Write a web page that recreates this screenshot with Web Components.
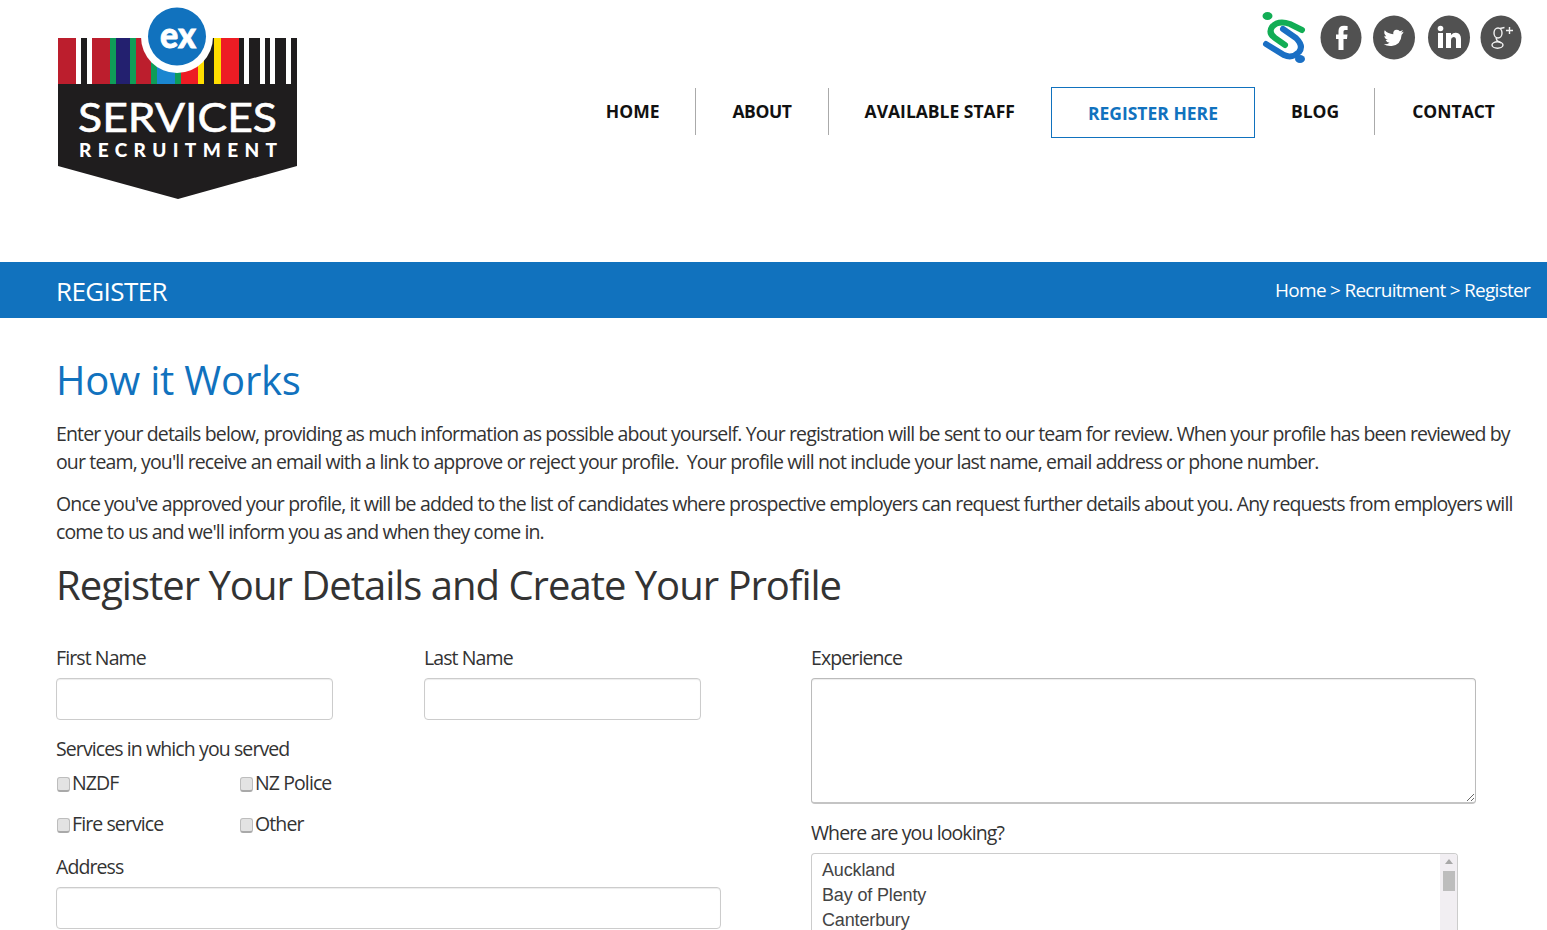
<!DOCTYPE html>
<html lang="en">
<head>
<meta charset="utf-8">
<title>Register</title>
<style>
html, body { margin: 0; padding: 0; height: 930px; overflow: hidden; background: #fff; }
body { font-family: "Open Sans", sans-serif; color: #333; }
</style>
</head>
<body>
<site-header></site-header>
<page-banner heading="REGISTER" trail="Home > Recruitment > Register"></page-banner>
<register-page></register-page>

<script>
class SiteLogo extends HTMLElement {
    constructor() {
        super();
        this.attachShadow({ mode: 'open' });
        // [x, width, colour] measured along the top band, left to right
        const stripes = [
            [58, 18, '#bc1e2d'], [81, 6, '#1f1d1e'], [92, 18, '#bc1e2d'], [110, 6, '#0f9d58'],
            [116, 14, '#23206f'], [130, 6, '#0f9d58'], [136, 15, '#bc1e2d'], [151, 6, '#0f9d58'],
            [157, 18, '#1a86d0'], [175, 6, '#0f9d58'], [181, 17, '#ed1c24'], [198, 6, '#ffdd00'],
            [204, 10, '#1f1d1e'], [214, 7, '#ffdd00'], [221, 18, '#ed1c24'], [239, 5, '#1f1d1e'],
            [249, 11, '#1f1d1e'], [265, 5, '#1f1d1e'], [275, 11, '#1f1d1e'], [291, 6, '#1f1d1e']
        ];
        const bars = stripes.map(s => `<rect x="${s[0]}" y="38" width="${s[1]}" height="47" fill="${s[2]}"/>`).join('');
        this.shadowRoot.innerHTML = `
            <style>
                :host { display: block; width: 240px; height: 193px; }
                svg { display: block; }
                text { font-family: "Lato", sans-serif; fill: #fff; }
            </style>
            <svg width="240" height="193" viewBox="58 7 240 193">
                ${bars}
                <path d="M58 84H297V166L178 199L58 166Z" fill="#1f1d1e"/>
                <circle cx="177" cy="37" r="36" fill="#fff"/>
                <circle cx="177" cy="36.500" r="29" fill="#1172be"/>
                <text x="160" y="48" font-size="36" font-weight="900" textLength="36" lengthAdjust="spacingAndGlyphs" stroke="#fff" stroke-width=".8">ex</text>
                <text x="78" y="132" font-size="40" font-weight="400" textLength="199" lengthAdjust="spacingAndGlyphs" stroke="#fff" stroke-width=".6">SERVICES</text>
                <text x="79" y="157" font-size="19" font-weight="900" textLength="198">RECRUITMENT</text>
            </svg>
        `;
    }
}

class SocialIcons extends HTMLElement {
    constructor() {
        super();
        this.attachShadow({ mode: 'open' });
        this.shadowRoot.innerHTML = `
            <style>
                :host { display: block; width: 262px; height: 52px; }
                svg { display: block; }
            </style>
            <svg width="262" height="52" viewBox="1261 12 262 52">
                <g fill="none" stroke-linecap="round" stroke-width="6">
                    <path d="M1283 29L1296 38Q1304 46 1299 52Q1292 59 1284 55L1266 44" stroke="#1a6fc4"/>
                    <path d="M1302 30L1290 24Q1278 20 1272 27Q1268 33 1275 38L1285 45" stroke="#12ad55"/>
                </g>
                <ellipse cx="1267.500" cy="16" rx="5" ry="4" fill="#12ad55"/>
                <ellipse cx="1300" cy="59" rx="5" ry="4" fill="#1a6fc4"/>

                <ellipse cx="1341" cy="37.500" rx="20.500" ry="22" fill="#515151"/>
                <path d="M1343.500 50V39H1347L1347.500 34.500H1343.500V31.500Q1343.500 30 1345 30H1347.600V26Q1346 25.700 1344 25.700Q1338.500 25.700 1338.500 31V34.500H1336V39H1338.500V50Z" fill="#fff"/>

                <ellipse cx="1394" cy="37.500" rx="21" ry="22" fill="#515151"/>
                <g transform="translate(1394 38) scale(.74) translate(-1394 -38)">
                    <path d="M1407 29.500Q1405 30.500 1403.500 30.600Q1405.500 29.300 1406 27.300Q1404 28.500 1402 29Q1400 27 1397.500 27Q1392.500 27.300 1393 32.800Q1386 32.500 1381.500 27.500Q1379.500 32 1383.500 35.500Q1382 35.500 1381 34.800Q1381 39 1385.500 40.500Q1384 41 1382.700 40.600Q1384 44 1388 44.400Q1385 46.800 1380 46.500Q1385 49.500 1391 48.800Q1403.500 47 1404.300 33.500Q1406 32 1407 29.500Z" fill="#fff"/>
                </g>

                <ellipse cx="1449" cy="37.500" rx="21" ry="22" fill="#515151"/>
                <g fill="#fff">
                    <rect x="1438" y="33" width="5" height="15"/>
                    <circle cx="1440.500" cy="28.500" r="2.800"/>
                    <path d="M1446 33H1451V35Q1453 32.500 1456 32.700Q1461 33 1461 39V48H1456V40Q1456 37 1453.500 37Q1451 37.300 1451 40V48H1446Z"/>
                </g>

                <ellipse cx="1501" cy="37.500" rx="20.500" ry="22" fill="#515151"/>
                <g fill="none" stroke="#f2f2f2" stroke-width="1.400">
                    <ellipse cx="1498" cy="33" rx="4" ry="5"/>
                    <ellipse cx="1497.500" cy="45" rx="5.500" ry="3.200"/>
                    <path d="M1500 28.500L1504.500 27.500M1496 38L1497 40.500L1501 43"/>
                    <path d="M1509.500 27V34M1506 30.500H1513"/>
                </g>
            </svg>
        `;
    }
}

class NavItem extends HTMLElement {
    constructor() {
        super();
        this.attachShadow({ mode: 'open' });
        this.shadowRoot.innerHTML = `
            <style>
                :host {
                    display: block; height: 47px; line-height: 47px; padding: 0 36px;
                    font-size: 17.500px; font-weight: 700; color: #111; white-space: nowrap;
                }
                :host([divider]) { border-right: 1px solid #aaa; }
                :host([current]) {
                    height: 49px; line-height: 51px; margin-top: -1px; color: #1172be;
                    border: 1px solid #1172be;
                }
            </style>
            <slot></slot>
        `;
    }
}

class SiteNav extends HTMLElement {
    constructor() {
        super();
        this.attachShadow({ mode: 'open' });
        this.shadowRoot.innerHTML = `
            <style>
                :host { display: flex; align-items: flex-start; }
            </style>
            <slot></slot>
        `;
    }
}

class SiteHeader extends HTMLElement {
    constructor() {
        super();
        this.attachShadow({ mode: 'open' });
        this.shadowRoot.innerHTML = `
            <style>
                :host {
                    display: flex; justify-content: space-between; height: 262px;
                    box-sizing: border-box; padding: 7px 16px 0 58px;
                }
                .right { display: flex; flex-direction: column; align-items: flex-end; padding-top: 5px; }
                social-icons { margin-right: 8px; }
                site-nav { margin-top: 24px; }
            </style>
            <site-logo></site-logo>
            <div class="right">
                <social-icons></social-icons>
                <site-nav>
                    <nav-item divider>HOME</nav-item>
                    <nav-item divider style="letter-spacing:-.4px">ABOUT</nav-item>
                    <nav-item>AVAILABLE STAFF</nav-item>
                    <nav-item current>REGISTER HERE</nav-item>
                    <nav-item divider style="padding-right:35px">BLOG</nav-item>
                    <nav-item style="padding-left:37px">CONTACT</nav-item>
                </site-nav>
            </div>
        `;
    }
}

class PageBanner extends HTMLElement {
    constructor() {
        super();
        this.attachShadow({ mode: 'open' });
        const heading = this.getAttribute('heading');
        const trail = this.getAttribute('trail').replace(/>/g, '&gt;');
        this.shadowRoot.innerHTML = `
            <style>
                :host {
                    display: flex; justify-content: space-between; align-items: center;
                    height: 56px; box-sizing: border-box; padding: 0 17px 0 56px;
                    background: #1172be; color: #fff;
                }
                .title { font-size: 26px; letter-spacing: -0.6px; padding-top: 1px; }
                .trail { font-size: 19px; letter-spacing: -0.73px; }
            </style>
            <div class="title">${heading}</div>
            <div class="trail">${trail}</div>
        `;
    }
}

class FormField extends HTMLElement {
    constructor() {
        super();
        this.attachShadow({ mode: 'open' });
        const kind = this.getAttribute('kind') || 'text';
        const control = kind === 'area' ? '<textarea></textarea>' : '<input type="text">';
        this.shadowRoot.innerHTML = `
            <style>
                :host { display: block; }
                label { display: block; font-size: 19.500px; line-height: 27px; letter-spacing: -0.9px; color: #333; margin-bottom: 7px; }
                input, textarea {
                    display: block; width: 100%; box-sizing: border-box; height: 42px; margin: 0;
                    border: 1px solid #ccc; border-radius: 4px; background: #fff; outline: 0;
                    box-shadow: inset 0 1px 1px rgba(0,0,0,.075);
                }
                textarea { height: 126px; border-color: #bbb; border-bottom: 2px solid #c4c4c4; }
            </style>
            <label>${this.getAttribute('label')}</label>
            ${control}
        `;
    }
}

class CheckOption extends HTMLElement {
    constructor() {
        super();
        this.attachShadow({ mode: 'open' });
        this.shadowRoot.innerHTML = `
            <style>
                :host { display: flex; align-items: flex-start; height: 41px; font-size: 19.500px; line-height: 27px; letter-spacing: -0.9px; color: #333; }
                .box {
                    width: 13px; height: 15px; margin: 8px 3px 0 1px; flex: none; box-sizing: border-box;
                    background: #e3e3e3; border: 1px solid #bdbdbd; border-bottom: 2px solid #a9a9a9; border-radius: 3px;
                }
                .label { margin-left: -1px; }
            </style>
            <span class="box"></span><span class="label"><slot></slot></span>
        `;
    }
}

class RegionList extends HTMLElement {
    constructor() {
        super();
        this.attachShadow({ mode: 'open' });
        this.shadowRoot.innerHTML = `
            <style>
                :host {
                    display: flex; justify-content: space-between; width: 647px; height: 77px; box-sizing: border-box;
                    border: 1px solid #ccc; border-bottom: 0; border-radius: 4px 4px 0 0; overflow: hidden;
                }
                .items { padding: 4px 0 0 10px; font-family: "Liberation Sans", Arial, sans-serif; font-size: 18px; line-height: 25px; letter-spacing: -0.15px; color: #444; }
                .bar { width: 17px; background: #f1eef2; }
                .arrow { width: 0; margin: 5px auto 0; border: 4px solid transparent; border-top: 0; border-bottom: 5px solid #a8a8a8; }
                .thumb { width: 12px; height: 20px; margin: 7px auto 0; background: #bdbdbd; }
            </style>
            <div class="items"><slot></slot></div>
            <div class="bar"><div class="arrow"></div><div class="thumb"></div></div>
        `;
    }
}

class RegisterPage extends HTMLElement {
    constructor() {
        super();
        this.attachShadow({ mode: 'open' });
        this.shadowRoot.innerHTML = `
            <style>
                :host { display: block; height: 612px; overflow: hidden; padding: 0 24px 0 56px; color: #333; }
                h1, h2 { margin: 0; font-weight: 400; font-size: 40px; line-height: 56px; }
                h1 { color: #1172be; padding-top: 34px; letter-spacing: -0.2px; }
                h2 { color: #333; margin-top: -3px; letter-spacing: -1px; }
                p { margin: 0 0 14px; font-size: 19.500px; line-height: 28px; letter-spacing: -0.86px; width: 1462px; }
                h1 + p { margin-top: 12px; }
                .form { display: grid; grid-template-columns: 755px 665px; margin-top: 31px; }
                .names { display: grid; grid-template-columns: 277px 277px; column-gap: 91px; }
                .served { font-size: 19.500px; line-height: 27px; letter-spacing: -0.9px; margin-top: 15px; }
                .checks { display: grid; grid-template-columns: 183px 183px; margin-top: 7px; }
                form-field.address { width: 665px; margin-top: 2px; }
                form-field.where { margin-top: 15px; }
            </style>
            <h1>How it Works</h1>
            <p>Enter your details below, providing as much information as possible about yourself. Your registration will be sent to our team for review. When your profile has been reviewed by our team, you'll receive an email with a link to approve or reject your profile.&nbsp; Your profile will not include your last name, email address or phone number.</p>
            <p>Once you've approved your profile, it will be added to the list of candidates where prospective employers can request further details about you. Any requests from employers will come to us and we'll inform you as and when they come in.</p>
            <h2>Register Your Details and Create Your Profile</h2>
            <div class="form">
                <div>
                    <div class="names">
                        <form-field label="First Name"></form-field>
                        <form-field label="Last Name"></form-field>
                    </div>
                    <div class="served">Services in which you served</div>
                    <div class="checks">
                        <check-option>NZDF</check-option>
                        <check-option>NZ Police</check-option>
                        <check-option>Fire service</check-option>
                        <check-option>Other</check-option>
                    </div>
                    <form-field class="address" label="Address"></form-field>
                </div>
                <div>
                    <form-field kind="area" label="Experience"></form-field>
                    <form-field class="where" label="Where are you looking?"></form-field>
                </div>
            </div>
        `;
        // the region picker replaces the plain input of its field
        const where = this.shadowRoot.querySelector('.where');
        const list = document.createElement('region-list');
        list.innerHTML = 'Auckland<br>Bay of Plenty<br>Canterbury';
        where.shadowRoot.querySelector('input').replaceWith(list);
    }
}

customElements.define('site-logo', SiteLogo);
customElements.define('social-icons', SocialIcons);
customElements.define('nav-item', NavItem);
customElements.define('site-nav', SiteNav);
customElements.define('site-header', SiteHeader);
customElements.define('page-banner', PageBanner);
customElements.define('form-field', FormField);
customElements.define('check-option', CheckOption);
customElements.define('region-list', RegionList);
customElements.define('register-page', RegisterPage);
</script>
</body>
</html>
